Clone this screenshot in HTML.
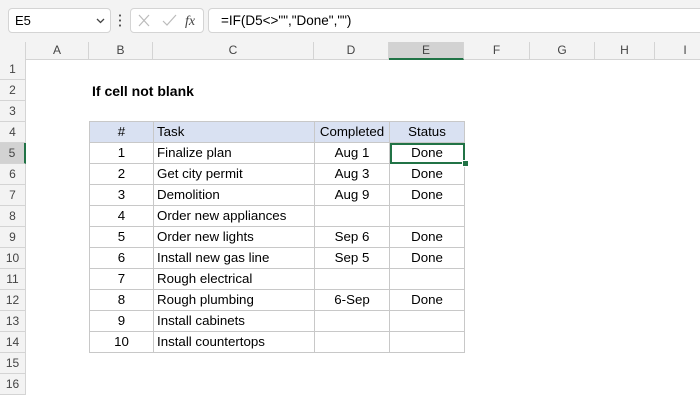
<html><head><style>
body{margin:0;width:700px;height:400px;background:#fff;font-family:"Liberation Sans",Calibri,sans-serif;position:relative;overflow:hidden}
.a{position:absolute}
.top{left:0;top:0;width:700px;height:42px;background:#f3f3f3}
.box{background:#fff;border:1px solid #d4d4d4;border-radius:4px}
.ch{top:42px;height:17px;background:#f3f3f3;border-right:1px solid #d4d4d4;border-bottom:1px solid #d4d4d4;font-size:12px;color:#444;text-align:center;line-height:17px}
.rh{left:0;width:25px;height:20px;background:#f3f3f3;border-right:1px solid #d4d4d4;border-bottom:1px solid #d4d4d4;font-size:12px;color:#444;text-align:center;line-height:21px}
table{position:absolute;left:89px;top:121px;border-collapse:collapse;font-size:13.3px}
td{border:1px solid #c8c8c8;height:20px;padding:0 3px;line-height:20px}
td.c{text-align:center}
tr.h td{background:#d9e1f2}
</style></head><body>
<div class="a top"></div>
<div class="a box" style="left:8px;top:8px;width:101px;height:23px"><span class="a" style="left:6px;top:4px;font-size:13px">E5</span><svg class="a" style="left:87px;top:9px" width="9" height="6"><path d="M1 1L4.5 4.5L8 1" stroke="#444" fill="none" stroke-width="1.3"/></svg></div>
<div class="a" style="left:119px;top:13px;width:2px;height:14px;background:radial-gradient(circle,#555 1px,transparent 1.2px) 0 0/2px 5px"></div>
<div class="a box" style="left:130px;top:8px;width:72px;height:23px">
<svg class="a" style="left:6px;top:5px" width="60" height="14"><path d="M2 1L12 12M12 1L2 12" stroke="#bbb" stroke-width="1.2"/><path d="M26 7L30 11L39 1" stroke="#bbb" fill="none" stroke-width="1.2"/><text x="48" y="11" font-family="Liberation Serif" font-style="italic" font-size="14" fill="#444">fx</text></svg></div>
<div class="a box" style="left:208px;top:8px;width:500px;height:23px"><span class="a" style="left:12px;top:4px;font-size:13.5px">=IF(D5&lt;&gt;"","Done","")</span></div>
<div class="a ch" style="left:0;width:25px"></div>
<div class="a ch" style="left:26px;width:62px">A</div>
<div class="a ch" style="left:89px;width:63px">B</div>
<div class="a ch" style="left:153px;width:160px">C</div>
<div class="a ch" style="left:314px;width:74px">D</div>
<div class="a ch" style="left:389px;width:74px;background:#d2d2d2;border-bottom:2px solid #217346;height:16px">E</div>
<div class="a ch" style="left:464px;width:65px">F</div>
<div class="a ch" style="left:530px;width:64px">G</div>
<div class="a ch" style="left:595px;width:59px">H</div>
<div class="a ch" style="left:655px;width:60px">I</div>
<div class="a rh" style="top:59px">1</div><div class="a rh" style="top:80px">2</div><div class="a rh" style="top:101px">3</div><div class="a rh" style="top:122px">4</div>
<div class="a rh" style="top:143px;background:#d2d2d2;border-right:2px solid #217346;width:24px">5</div>
<div class="a rh" style="top:164px">6</div><div class="a rh" style="top:185px">7</div><div class="a rh" style="top:206px">8</div><div class="a rh" style="top:227px">9</div><div class="a rh" style="top:248px">10</div><div class="a rh" style="top:269px">11</div><div class="a rh" style="top:290px">12</div><div class="a rh" style="top:311px">13</div><div class="a rh" style="top:332px">14</div><div class="a rh" style="top:353px">15</div><div class="a rh" style="top:374px">16</div>
<div class="a" style="left:92px;top:83px;font-size:14px;font-weight:bold">If cell not blank</div>
<table>
<tr class="h"><td class="c" style="width:57px">#</td><td style="width:154px">Task</td><td class="c" style="width:68px">Completed</td><td class="c" style="width:68px">Status</td></tr>
<tr><td class="c">1</td><td>Finalize plan</td><td class="c">Aug 1</td><td class="c" style="outline:2px solid #217346;outline-offset:-2px">Done</td></tr>
<tr><td class="c">2</td><td>Get city permit</td><td class="c">Aug 3</td><td class="c">Done</td></tr>
<tr><td class="c">3</td><td>Demolition</td><td class="c">Aug 9</td><td class="c">Done</td></tr>
<tr><td class="c">4</td><td>Order new appliances</td><td></td><td></td></tr>
<tr><td class="c">5</td><td>Order new lights</td><td class="c">Sep 6</td><td class="c">Done</td></tr>
<tr><td class="c">6</td><td>Install new gas line</td><td class="c">Sep 5</td><td class="c">Done</td></tr>
<tr><td class="c">7</td><td>Rough electrical</td><td></td><td></td></tr>
<tr><td class="c">8</td><td>Rough plumbing</td><td class="c">6-Sep</td><td class="c">Done</td></tr>
<tr><td class="c">9</td><td>Install cabinets</td><td></td><td></td></tr>
<tr><td class="c">10</td><td>Install countertops</td><td></td><td></td></tr>
</table>
<div class="a" style="left:462px;top:160px;width:5px;height:5px;background:#217346;border:1px solid #fff"></div>
</body></html>
